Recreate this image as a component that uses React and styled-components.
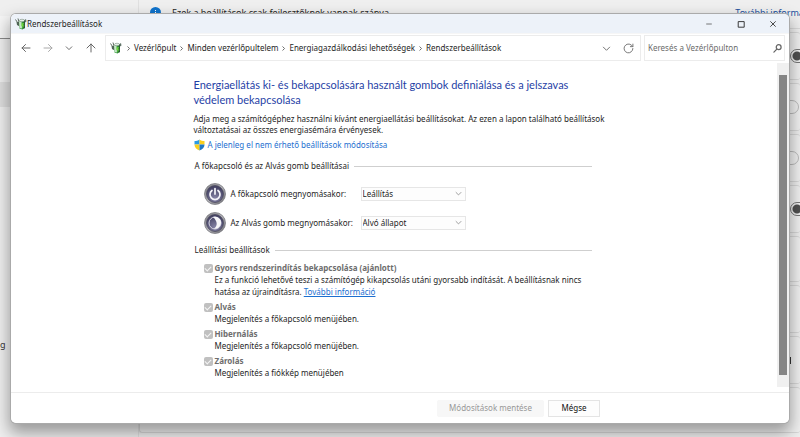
import React from "react";
import styled, { createGlobalStyle, css } from "styled-components";

const GlobalStyle = createGlobalStyle`
  * { box-sizing: border-box; }
  body {
    margin: 0;
    overflow: hidden;
    font-family: "Noto Sans", "Open Sans", sans-serif;
    font-size: 8px;
    line-height: 12px;
    color: #1e1e1e;
  }
  button, input, select { font: inherit; color: inherit; }
`;

/* Settings page behind the window */

const Desktop = styled.main`
  position: relative;
  display: grid;
  grid-template-columns: 139px minmax(0, 1fr);
  height: 100vh;
  background: #efefef;
  overflow: hidden;
`;

const Sidebar = styled.aside`
  display: flex;
  flex-direction: column;
  border-right: 1px solid #e0e0e0;
`;

const SidebarSearch = styled.div`
  height: 39px;
  border-bottom: 1px solid #8a8a8a;
  background: linear-gradient(#efefef 16px, #f5f5f5 16px);
`;

const SidebarItem = styled.div`
  height: 25px;
  margin-top: 43px;
  background: #dedede;
`;

const SidebarText = styled.div`
  margin-top: 232px;
  font-size: 9px;
  color: #333;
`;

const Page = styled.section`
  display: flex;
  flex-direction: column;
  min-width: 0;
`;

const Notice = styled.div`
  display: flex;
  align-items: center;
  gap: 11px;
  height: 29px;
  flex: none;
  padding: 0 0 3px 11px;
  border-bottom: 1px solid #dadada;
  font-size: 9px;
  white-space: nowrap;
`;

const NoticeLink = styled.a`
  margin-left: auto;
  margin-right: -16px;
  color: #20509e;
  text-decoration: none;
`;

const Card = styled.div`
  display: flex;
  align-items: center;
  justify-content: flex-end;
  flex: none;
  height: ${(p) => p.$height}px;
  margin-top: 3px;
  border: 1px solid #d8d8d8;
  border-right: 0;
  border-radius: 3px;
  background: #f1f1f1;
`;

const Switch = styled.span`
  width: 24px;
  height: 14px;
  margin-right: ${(p) => (p.$on ? "-14px" : "1px")};
  border: 1px solid ${(p) => (p.$on ? "#777" : "#bbb")};
  border-radius: 7px;
  ${(p) =>
    p.$on &&
    css`
      background: radial-gradient(circle at 6px 6px, #505050 4px, transparent 5px);
    `}
`;

const Marker = styled.span`
  width: 1px;
  height: 7px;
  margin-right: 9px;
  background: #333;
`;

/* Control Panel window */

const Window = styled.section`
  position: absolute;
  inset: 14px 11px;
  display: flex;
  flex-direction: column;
  overflow: hidden;
  border-radius: 5px;
  background: #fff;
`;

const Shadow = styled.div`
  position: absolute;
  inset: 14px 11px;
  border-radius: 5px;
  box-shadow: 0 0 0 1px #aaaaaa, 0 8px 16px 2px rgba(0, 0, 0, 0.36);
`;

const TitleBar = styled.header`
  display: flex;
  align-items: center;
  flex: none;
  height: 19px;
  padding-left: 4px;
  background: #edf2f9;
`;

const Title = styled.h1`
  margin: 0 auto 0 0;
  font-size: 8px;
  font-weight: 400;
`;

const CaptionButton = styled.button`
  display: flex;
  align-items: center;
  justify-content: center;
  width: 32px;
  height: 19px;
  padding: 0;
  border: 0;
  background: none;
`;

const NavBar = styled.nav`
  display: flex;
  align-items: center;
  flex: none;
  height: 29px;
  padding: 0 4px;
  gap: 3px;
  border-top: 1px solid #f6f6f6;
`;

const NavButtons = styled.div`
  display: flex;
  width: 87px;
`;

const NavButton = styled.button`
  display: flex;
  align-items: center;
  justify-content: center;
  width: 22px;
  height: 22px;
  padding: 0;
  border: 0;
  background: none;
`;

const Field = styled.div`
  display: flex;
  align-items: center;
  height: 26px;
  border: 1px solid #ececec;
  background: #fff;
`;

const AddressBar = styled(Field)`
  flex: 1;
  min-width: 0;
  padding: 0 1px 0 4px;
`;

const Crumbs = styled.ol`
  display: flex;
  align-items: center;
  flex: 1;
  margin: 0;
  padding: 0 0 0 1px;
  list-style: none;
  white-space: nowrap;
`;

const Crumb = styled.li`
  display: flex;
  align-items: center;
  a { color: inherit; text-decoration: none; }
  svg { margin: 0 2px; }
`;

const SearchBox = styled(Field)`
  width: 141px;
  padding: 0 2px 0 3px;
`;

const SearchInput = styled.input`
  flex: 1;
  min-width: 0;
  padding: 0;
  border: 0;
  outline: 0;
  background: none;
  &::placeholder { color: #6b6b6b; opacity: 1; }
`;

const Body = styled.div`
  display: flex;
  flex: 1;
  min-height: 0;
`;

const ScrollArea = styled.div`
  flex: 1;
  min-width: 0;
  overflow: hidden;
`;

const ScrollTrack = styled.div`
  width: 12px;
  margin: 1px 0 5px;
  padding: 12px 2px;
  background: #f0f0f0;
`;

const ScrollThumb = styled.div`
  height: 100%;
  background: #858585;
`;

const Content = styled.div`
  max-width: 401px;
  margin: 0 auto;
  padding-top: 15px;
`;

const Heading = styled.h2`
  margin: 0;
  font-family: Lato, "Open Sans", sans-serif;
  font-size: 11px;
  line-height: 15px;
  font-weight: 400;
  color: #1f3fa6;
`;

const Intro = styled.p`
  margin: 6px 0 0;
  line-height: 11px;
  white-space: nowrap;
`;

const AdminLink = styled.a`
  display: flex;
  align-items: center;
  gap: 3px;
  margin-top: 4px;
  color: #1c6fd0;
  text-decoration: none;
`;

const Section = styled.fieldset`
  margin: ${(p) => p.$gap}px 0 0;
  padding: 0 3px 0 1px;
  border: 0;
  min-width: 0;
`;

const Legend = styled.legend`
  display: flex;
  align-items: center;
  gap: 5px;
  width: 100%;
  padding: 0;
  &::after {
    content: "";
    flex: 1;
    height: 1px;
    background: #cfcfcf;
  }
`;

const PowerRow = styled.div`
  display: grid;
  grid-template-columns: 22px 125px 105px;
  column-gap: 5px;
  align-items: center;
  height: 29px;
  padding-left: 9px;
`;

const SelectBox = styled.div`
  display: grid;
  align-items: center;
  border: 1px solid #e6e6e6;
  background: #fdfdfd;
  > * { grid-area: 1 / 1; }
  svg { justify-self: end; margin-right: 3px; pointer-events: none; }
`;

const Select = styled.select`
  appearance: none;
  width: 100%;
  height: 12px;
  padding: 0 12px 0 1px;
  border: 0;
  background: none;
  line-height: 12px;
`;

const Power = styled.div`
  padding-top: 7px;
`;

const Options = styled.div`
  display: grid;
  row-gap: 3px;
  padding: 6px 0 0 9px;
`;

const Option = styled.div`
  display: grid;
  grid-template-columns: 9px 1fr;
  column-gap: 2px;
  align-items: center;
`;

const Checkbox = styled.input`
  appearance: none;
  width: 9px;
  height: 9px;
  margin: 0;
  border-radius: 2px;
  background: #c0c0c0;
  display: grid;
  place-items: center;
  &::before {
    content: "";
    width: 5px;
    height: 3px;
    border: solid #f4f4f4;
    border-width: 0 0 1px 1px;
    transform: rotate(-45deg);
  }
`;

const OptionLabel = styled.label`
  font-weight: 700;
  color: #6d6d6d;
`;

const OptionText = styled.p`
  grid-column: 2;
  margin: 0;
  white-space: nowrap;
  a { color: #1c6fd0; }
`;

const Footer = styled.footer`
  display: flex;
  align-items: center;
  justify-content: flex-end;
  gap: 4px;
  flex: none;
  height: 31px;
  padding-right: 189px;
  border-top: 1px solid #ececec;
`;

const FooterButton = styled.button`
  width: ${(p) => p.$width}px;
  height: 17px;
  padding: 0;
  border: 1px solid #e4e4e4;
  background: #fdfdfd;
  color: #111;
  &:disabled {
    border-color: #f7f7f7;
    border-radius: 2px;
    background: #f7f7f7;
    color: #979797;
  }
`;

/* Icons */

const Line = ({ size = 10, color = "#666", d, width = 1 }) => (
  <svg width={size} height={size} viewBox="0 0 10 10" fill="none" stroke={color}
    strokeWidth={width} strokeLinecap="round" strokeLinejoin="round" aria-hidden="true">
    <path d={d} />
  </svg>
);

const PowerPlanIcon = () => (
  <svg width="12" height="12" viewBox="0 0 24 24" aria-hidden="true">
    <path d="M1 3l4 6 4 2M6 1l2 7" stroke="#5b6b5e" strokeWidth="2" fill="none" />
    <path d="M3 8l5 0 3 5-2 4-5-3z" fill="#4e6354" />
    <path d="M8 7l11-3 1 15-5 4-6-2z" fill="#34973a" />
    <path d="M8 7l5-1 1 15-5-1z" fill="#c6e6c8" />
    <path d="M17 5l3-1v16l-3 2z" fill="#2b5a33" />
    <ellipse cx="14" cy="5" rx="5" ry="2.500" fill="#e5efe6" stroke="#6b7f70" />
    <path d="M13 11l5-1-2 5h3l-5 5 1-4h-2z" fill="#6fd83c" />
    <path d="M19 4l3-2 1 5-3 2z" fill="#62756a" />
  </svg>
);

const ShieldIcon = () => (
  <svg width="11" height="12" viewBox="0 0 22 24" aria-hidden="true">
    <path d="M11 1C8 3 5 4 1 4v7h10z" fill="#2a9be4" />
    <path d="M11 1c3 2 6 3 10 3v7H11z" fill="#f9cf1f" />
    <path d="M1 11c0 6 4 10 10 12V11z" fill="#f9cf1f" />
    <path d="M21 11c0 6-4 10-10 12V11z" fill="#1e78c8" />
  </svg>
);

const RoundButtonIcon = ({ id, children }) => (
  <svg width="22" height="22" viewBox="0 0 44 44" aria-hidden="true">
    <defs>
      <radialGradient id={id} cx="50%" cy="75%" r="65%">
        <stop offset="0" stopColor="#8583a6" />
        <stop offset="1" stopColor="#454365" />
      </radialGradient>
      <linearGradient id={id + "-rim"} x1="0" y1="0" x2="1" y2="1">
        <stop offset="0" stopColor="#7c7c82" />
        <stop offset="0.500" stopColor="#b2b2b8" />
        <stop offset="1" stopColor="#6b6b71" />
      </linearGradient>
    </defs>
    <circle cx="22" cy="22" r="21" fill={`url(#${id}-rim)`} stroke="#77777c" strokeWidth="1.500" />
    <circle cx="22" cy="22" r="17" fill={`url(#${id})`} stroke="#4b4a5b" strokeWidth="1.500" />
    {children}
  </svg>
);

const PowerIcon = () => (
  <RoundButtonIcon id="power">
    <path d="M16 15a10 10 0 1 0 12 0M22 11v11" fill="none" stroke="#f2f2f8" strokeWidth="3.500" strokeLinecap="round" />
  </RoundButtonIcon>
);

const SleepIcon = () => (
  <RoundButtonIcon id="sleep">
    <circle cx="22" cy="22" r="12" fill="none" stroke="#d6d5e3" strokeWidth="2" />
    <path d="M18 10c9-3 17 4 16 12-1 8-8 13-14 11 8-5 7-15-2-23z" fill="#f6f6fa" />
  </RoundButtonIcon>
);

const InfoIcon = () => (
  <svg width="11" height="11" viewBox="0 0 11 11" aria-hidden="true">
    <circle cx="5.500" cy="5.500" r="5.500" fill="#0f73cc" />
    <path d="M5.500 3v1M5.500 5v3" stroke="#fff" />
  </svg>
);

const RIGHT = "M4 2.500L6.500 5 4 7.500";
const DOWN = "M1.500 3.500L5 7l3.500-3.500";

const crumbs = ["Vezérlőpult", "Minden vezérlőpultelem", "Energiagazdálkodási lehetőségek", "Rendszerbeállítások"];

const cards = [
  { height: 48, on: true },
  { height: 48, on: false },
  { height: 48, on: false },
  { height: 48, on: true },
  { height: 46 },
  { height: 48 },
  { height: 48, marker: true },
  { height: 46 },
];

const options = [
  { id: "sleep-option", label: "Alvás", text: "Megjelenítés a főkapcsoló menüjében." },
  { id: "hibernate-option", label: "Hibernálás", text: "Megjelenítés a főkapcsoló menüjében." },
  { id: "lock-option", label: "Zárolás", text: "Megjelenítés a fiókkép menüjében" },
];

function SettingsPage() {
  return (
    <>
      <Sidebar>
        <SidebarSearch />
        <SidebarItem />
        <SidebarText>g</SidebarText>
      </Sidebar>
      <Page>
        <Notice>
          <InfoIcon />
          Ezek a beállítások csak fejlesztőknek vannak szánva.
          <NoticeLink href="#info">További információ</NoticeLink>
        </Notice>
        {cards.map((card, i) => (
          <Card key={i} $height={card.height}>
            {"on" in card && <Switch $on={card.on} />}
            {card.marker && <Marker />}
          </Card>
        ))}
      </Page>
    </>
  );
}

function PowerChoice({ id, icon, label, value }) {
  return (
    <PowerRow>
      {icon}
      <label htmlFor={id}>{label}</label>
      <SelectBox>
        <Select id={id} defaultValue={value}>
          <option>{value}</option>
        </Select>
        <Line size={7} d={DOWN} color="#777" />
      </SelectBox>
    </PowerRow>
  );
}

export default function App() {
  return (
    <Desktop>
      <GlobalStyle />
      <SettingsPage />
      <Shadow />
      <Window>
        <TitleBar>
          <PowerPlanIcon />
          <Title>Rendszerbeállítások</Title>
          <CaptionButton aria-label="Kis méret"><Line size={8} d="M2 5h6" color="#555" /></CaptionButton>
          <CaptionButton aria-label="Teljes méret"><Line size={8} d="M2 2h7v7H2z" color="#333" width={1.2} /></CaptionButton>
          <CaptionButton aria-label="Bezárás"><Line size={8} d="M2 2l6 6M8 2l-6 6" color="#333" width={1.1} /></CaptionButton>
        </TitleBar>
        <NavBar>
          <NavButtons>
            <NavButton aria-label="Vissza"><Line d="M9 5H1M4.500 1.500L1 5l3.500 3.500" /></NavButton>
            <NavButton aria-label="Előre"><Line d="M1 5h8M5.500 1.500L9 5 5.500 8.500" color="#aaa" /></NavButton>
            <NavButton aria-label="Legutóbbi helyek"><Line size={8} d={DOWN} width={1.2} /></NavButton>
            <NavButton aria-label="Fel"><Line d="M5 9V1M1 5l4-4 4 4" /></NavButton>
          </NavButtons>
          <AddressBar>
            <PowerPlanIcon />
            <Crumbs>
              {crumbs.map((name) => (
                <Crumb key={name}>
                  <Line size={7} d={RIGHT} width={1.4} />
                  <a href="#crumb">{name}</a>
                </Crumb>
              ))}
            </Crumbs>
            <NavButton aria-label="Előzmények"><Line size={9} d={DOWN} /></NavButton>
            <NavButton aria-label="Frissítés"><Line size={11} d="M9 5a4 4 0 1 1-1.200-2.900L9 3.300M9 1v2.300H6.700" color="#777" width={0.9} /></NavButton>
          </AddressBar>
          <SearchBox>
            <SearchInput aria-label="Keresés" placeholder="Keresés a Vezérlőpulton" />
            <Line size={9} d="M4 6L1 9M9 3.500a2.700 2.700 0 1 1-5.400 0 2.700 2.700 0 0 1 5.400 0z" width={1.4} />
          </SearchBox>
        </NavBar>
        <Body>
          <ScrollArea>
            <Content>
              <Heading>
                Energiaellátás ki- és bekapcsolására használt gombok definiálása és a jelszavas
                <br />
                védelem bekapcsolása
              </Heading>
              <Intro>
                Adja meg a számítógéphez használni kívánt energiaellátási beállításokat. Az ezen a lapon található beállítások
                <br />
                változtatásai az összes energiasémára érvényesek.
              </Intro>
              <AdminLink href="#admin">
                <ShieldIcon />
                A jelenleg el nem érhető beállítások módosítása
              </AdminLink>
              <Section $gap={9}>
                <Legend>A főkapcsoló és az Alvás gomb beállításai</Legend>
                <Power>
                  <PowerChoice id="power-button" icon={<PowerIcon />} label="A főkapcsoló megnyomásakor:" value="Leállítás" />
                  <PowerChoice id="sleep-button" icon={<SleepIcon />} label="Az Alvás gomb megnyomásakor:" value="Alvó állapot" />
                </Power>
              </Section>
              <Section $gap={7}>
                <Legend>Leállítási beállítások</Legend>
                <Options>
                  <Option>
                    <Checkbox type="checkbox" id="fast-start" defaultChecked disabled />
                    <OptionLabel htmlFor="fast-start">Gyors rendszerindítás bekapcsolása (ajánlott)</OptionLabel>
                    <OptionText>
                      Ez a funkció lehetővé teszi a számítógép kikapcsolás utáni gyorsabb indítását. A beállításnak nincs
                      <br />
                      hatása az újraindításra. <a href="#more">További információ</a>
                    </OptionText>
                  </Option>
                  {options.map((o) => (
                    <Option key={o.id}>
                      <Checkbox type="checkbox" id={o.id} defaultChecked disabled />
                      <OptionLabel htmlFor={o.id}>{o.label}</OptionLabel>
                      <OptionText>{o.text}</OptionText>
                    </Option>
                  ))}
                </Options>
              </Section>
            </Content>
          </ScrollArea>
          <ScrollTrack><ScrollThumb /></ScrollTrack>
        </Body>
        <Footer>
          <FooterButton $width={107} disabled>Módosítások mentése</FooterButton>
          <FooterButton $width={52}>Mégse</FooterButton>
        </Footer>
      </Window>
    </Desktop>
  );
}
